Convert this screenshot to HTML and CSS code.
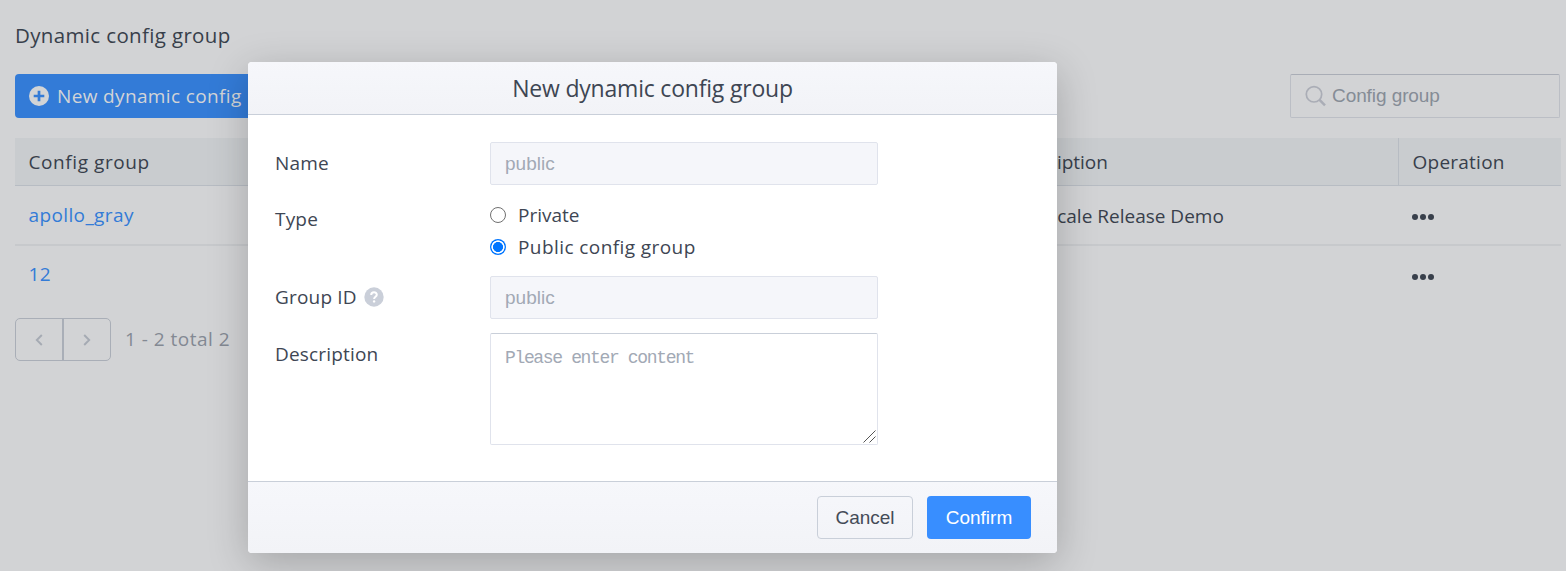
FILE: index.html
```
<!DOCTYPE html>
<html lang="en">
<head>
<meta charset="utf-8">
<title>Dynamic config group</title>
<link rel="stylesheet" href="styles.css">
</head>
<body>
<main class="page">
  <h1 class="page-title">Dynamic config group</h1>
  <div class="toolbar">
    <button class="new-btn">
      <svg class="plus-icon" width="20" height="20" viewBox="0 0 20 20"><circle cx="10" cy="10" r="10" fill="#d2d4d6"/><path d="M10 4.700v10.600M4.700 10h10.600" stroke="#337bd7" stroke-width="2.700"/></svg>
      <span class="t-new">New dynamic config</span>
    </button>
    <div class="search">
      <svg width="22" height="22" viewBox="0 0 22 22" fill="none" stroke="#aaadb6"><circle cx="9" cy="9.300" r="7.700" stroke-width="1.700"/><path d="M14.300 14.600l5.700 5.700" stroke-width="2.500"/></svg>
      <span>Config group</span>
    </div>
  </div>
  <div class="table">
    <div class="row head"><div class="cell t-group">Config group</div><div class="cell desc">Description</div><div class="cell op">Operation</div></div>
    <div class="row first"><div class="cell link t-apollo">apollo_gray</div><div class="cell desc t-demo">Grayscale Release Demo</div><div class="cell op"><i class="dots"><b></b><b></b><b></b></i></div></div>
    <div class="row last"><div class="cell link t-12">12</div><div class="cell desc"></div><div class="cell op"><i class="dots"><b></b><b></b><b></b></i></div></div>
  </div>
  <div class="pager">
    <div class="pager-btns">
      <span class="pg"><svg width="8" height="12" viewBox="0 0 8 12"><path d="M6.800 1L1.800 6l5 5" fill="none" stroke="#a5aab3" stroke-width="1.900"/></svg></span>
      <span class="pg"><svg width="8" height="12" viewBox="0 0 8 12"><path d="M1.200 1l5 5-5 5" fill="none" stroke="#a5aab3" stroke-width="1.900"/></svg></span>
    </div>
    <span class="t-total">1 - 2 total 2</span>
  </div>
</main>

<section class="modal">
  <header class="modal-head"><span>New dynamic config group</span></header>
  <div class="modal-body">
    <div class="field"><label class="lbl">Name</label><div class="input">public</div></div>
    <div class="field type"><label class="lbl">Type</label>
      <div class="radios">
        <div class="radio"><i class="dot"></i><span>Private</span></div>
        <div class="radio"><i class="dot on"></i><span class="t-public">Public config group</span></div>
      </div>
    </div>
    <div class="field"><label class="lbl">Group ID</label>
      <svg class="help" width="20" height="20" viewBox="0 0 20 20"><circle cx="10" cy="10" r="9.700" fill="#cacfd9"/><path d="M7.200 7.900C7.200 4.500 12.800 4.500 12.800 7.700c0 2-2.700 2.100-2.700 4.300" fill="none" stroke="#fff" stroke-width="2"/><circle cx="10.100" cy="14.400" r="1.200" fill="#fff"/></svg>
      <div class="input">public</div></div>
    <div class="field area"><label class="lbl">Description</label><textarea class="textarea" placeholder="Please enter content"></textarea>
      <svg class="grip" width="13" height="13" viewBox="0 0 13 13"><path d="M.5 12.500l12-12M6.500 12.500l6-6" stroke="#555" stroke-width="1"/></svg></div>
  </div>
  <footer class="modal-foot"><button class="btn">Cancel</button><button class="btn primary">Confirm</button></footer>
</section>
</body>
</html>
```
FILE: styles.css
```
* { box-sizing: border-box; }
body {
  margin: 0;
  height: 571px;
  overflow: hidden;
  background: #d2d3d5;
  color: #383f4b;
  font-family: "Open Sans", sans-serif;
  font-size: 19px;
  line-height: 26px;
}
button { font: inherit; border: 0; margin: 0; }
i { font-style: normal; }
.page { padding: 22px 5px 0 15px; }
.page-title { margin: 0; font-size: 20.500px; font-weight: 400; line-height: 26px; letter-spacing: .350px; }
.toolbar { display: flex; justify-content: space-between; margin: 26px 1px 20px 0; }
.new-btn {
  display: flex; align-items: center; gap: 8px;
  width: 300px; height: 44px; padding: 0 14px;
  border-radius: 4px; background: #337bd7; color: #d2d4d6;
  white-space: nowrap; font-weight: 500;
}
.t-new { letter-spacing: .360px; }
.t-group { letter-spacing: .580px; }
.t-apollo { letter-spacing: .380px; }
.t-12 { letter-spacing: .300px; padding-bottom: 2px; }
.t-demo { letter-spacing: 0; padding-top: 2px; }
.t-total { letter-spacing: .480px; margin-top: -2px; }
.t-public { letter-spacing: .420px; }
.search {
  display: flex; align-items: center; gap: 5px;
  width: 270px; height: 44px; padding: 0 14px;
  border: 1px solid #bbbec5; border-top-color: #a9adb6; border-radius: 2px;
  color: #858c96; font: 19px "Liberation Sans", sans-serif; letter-spacing: -.080px;
}
.table { width: 1546px; }
.row { display: grid; grid-template-columns: 978px 405px 163px; }
.cell { padding-left: 13.500px; display: flex; align-items: center; white-space: nowrap; }
.head { height: 48px; background: #c9cccf; border-bottom: 1px solid #b7bcc3; }
.head .op { border-left: 1px solid #b7bcc3; letter-spacing: .240px; }
.first { height: 60px; border-bottom: 2px solid #c7c9cc; }
.last { height: 58px; }
.link { color: #337bd7; }
.dots { display: flex; gap: 2.300px; padding-top: 4px; }
.dots b { width: 6px; height: 6px; border-radius: 50%; background: #383f4b; }
.pager { display: flex; align-items: center; gap: 14px; margin-top: 14px; color: #838993; }
.pager-btns { display: flex; width: 96px; height: 43px; border: 1px solid #a9aeb7; border-radius: 5px; }
.pg { flex: 1; display: flex; align-items: center; justify-content: center; }
.pg + .pg { border-left: 2px solid #a9aeb7; }

.modal {
  position: absolute; left: 248px; top: 62px;
  width: 809px; height: 491px;
  display: flex; flex-direction: column;
  background: #fff; border-radius: 4px; overflow: hidden;
  box-shadow: 0 10px 40px rgba(0, 0, 0, .22);
  color: #3e4653;
}
.modal-head {
  height: 53px; display: flex; align-items: center; justify-content: center;
  border-bottom: 1px solid #c9cfd9;
  background: linear-gradient(#f6f7fb, #f2f3f7);
  font-size: 23px; letter-spacing: -.200px;
}
.modal-body { flex: 1; padding: 27px 27px 0; }
.field { display: flex; align-items: flex-start; position: relative; }
.lbl { flex: 0 0 215px; padding-top: 8px; letter-spacing: .180px; }
.input {
  width: 388px; height: 43px; padding: 0 14px;
  border: 1px solid #e0e3ec; border-radius: 2px; background: #f5f6fa;
  color: #a2a9b5; font: 19px/41px "Liberation Sans", sans-serif;
}
.type { height: 91px; padding-top: 14px; }
.type .lbl { padding-top: 7px; }
.radios { display: flex; flex-direction: column; }
.radio { display: flex; align-items: center; gap: 12px; height: 32px; }
.dot { width: 16px; height: 16px; border: 1px solid #707070; border-radius: 50%; background: #fff; }
.dot.on { border: 0; background: radial-gradient(circle, #0075ff 4.700px, #fff 5.300px, #fff 6.300px, #0075ff 6.900px); }
.help { position: absolute; left: 89px; top: 11px; }
.area { padding-top: 14px; }
.textarea {
  display: block; width: 388px; height: 112px; margin: 0; padding: 11px 14px; outline: 0; resize: none;
  border: 1px solid #e0e3ec; border-top-color: #c9cfd9; border-radius: 2px;
  font: 18px/26px "Liberation Mono", monospace; letter-spacing: -1.350px;
}
.textarea::placeholder { color: #a2a9b5; }
.grip { position: absolute; left: 588px; top: 111px; }
.modal-foot {
  height: 72px; display: flex; justify-content: flex-end; gap: 14px; padding: 14px 26px;
  border-top: 1px solid #c9cfd9; background: linear-gradient(#f6f7fb, #f2f3f7);
}
.btn {
  width: 96px; height: 43px; border: 1px solid #c9cfd9; border-radius: 4px;
  background: transparent; color: #444b57; font: 19px "Liberation Sans", sans-serif; padding: 0;
}
.btn.primary { width: 104px; border: 0; background: #388eff; color: #fff; }
```
